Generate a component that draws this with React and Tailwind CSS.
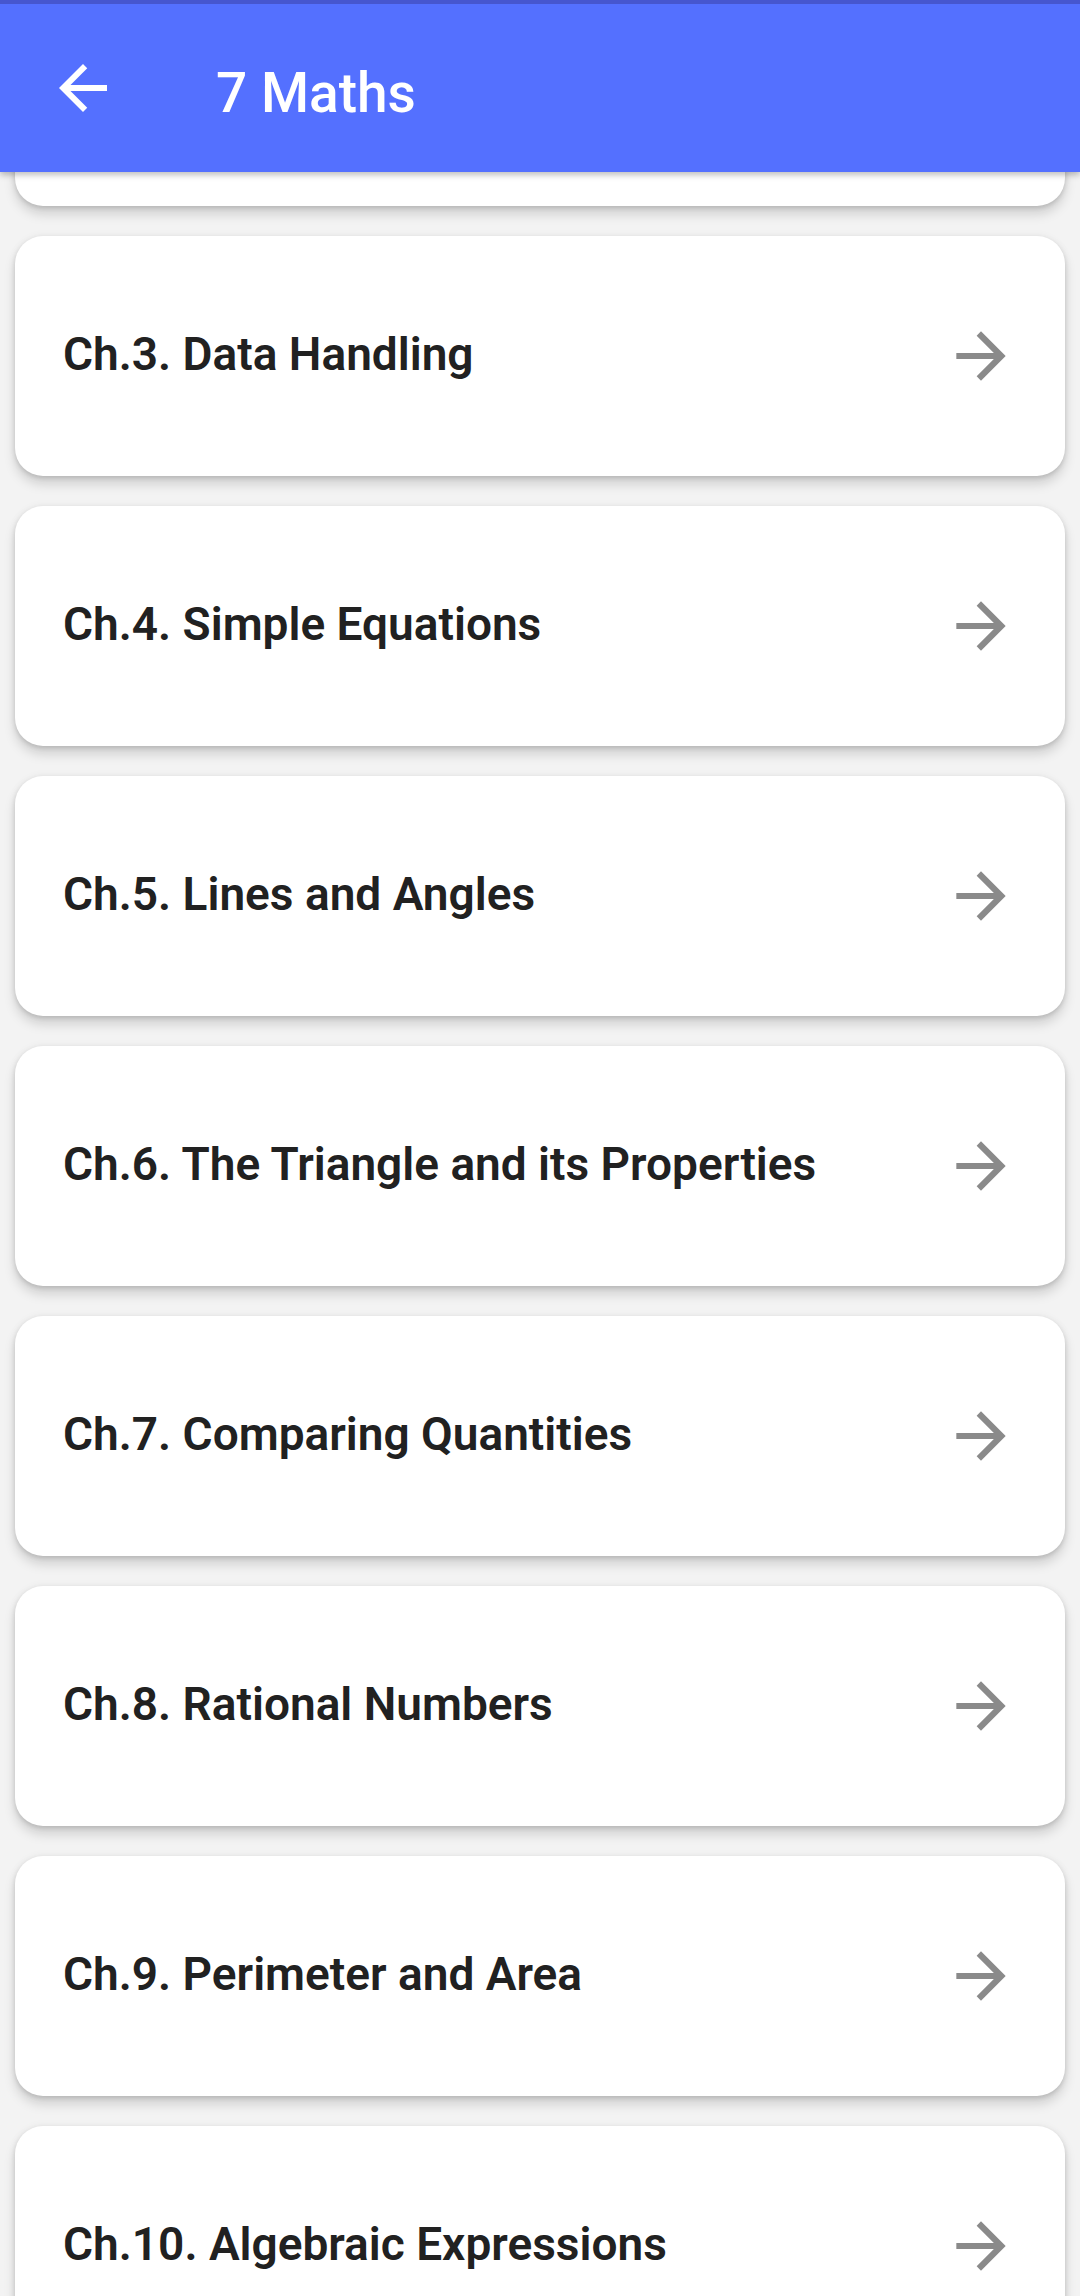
const CHAPTERS = [
  "Ch.3. Data Handling",
  "Ch.4. Simple Equations",
  "Ch.5. Lines and Angles",
  "Ch.6. The Triangle and its Properties",
  "Ch.7. Comparing Quantities",
  "Ch.8. Rational Numbers",
  "Ch.9. Perimeter and Area",
  "Ch.10. Algebraic Expressions",
];

const CARD =
  "h-[240px] rounded-[28px] bg-white shadow-[0_8px_12px_rgba(0,0,0,0.15),0_2px_4px_rgba(0,0,0,0.1),0_0_8px_rgba(0,0,0,0.05)]";

function ArrowBack() {
  return (
    <svg viewBox="0 0 24 24" className="h-[72px] w-[72px]" fill="currentColor">
      <path d="M20 11H7.83l5.59-5.59L12 4l-8 8 8 8 1.41-1.41L7.83 13H20v-2z" />
    </svg>
  );
}

function ArrowForward() {
  return (
    <svg viewBox="0 0 24 24" className="h-[74px] w-[74px]" fill="currentColor">
      <path d="M12 4l-1.41 1.41L16.17 11H4v2h12.17l-5.58 5.59L12 20l8-8z" />
    </svg>
  );
}

function ChapterCard({ title }) {
  return (
    <div className={`${CARD} flex items-center justify-between pl-[48px] pr-[47px]`}>
      <span className="pb-[3px] text-[46px] font-semibold text-[#212121]">{title}</span>
      <span className="text-[#8a8a8a]">
        <ArrowForward />
      </span>
    </div>
  );
}

export default function App() {
  return (
    <div
      className="relative h-[2296px] w-[1080px] overflow-hidden bg-[#f3f3f3]"
      style={{ fontFamily: "Roboto, 'Noto Sans', sans-serif" }}
    >
      <header className="relative z-10 bg-[#5470ff] shadow-[0_3px_6px_rgba(0,0,0,0.25)]">
        <div className="h-[4px] bg-[#4656cf]" />
        <div className="flex h-[168px] items-center">
          <div className="ml-[47px] text-white">
            <ArrowBack />
          </div>
          <h1 className="ml-[97px] pt-[10px] text-[55px] leading-none font-medium text-white">7 Maths</h1>
        </div>
      </header>
      {/* lista desplazada: la primera tarjeta queda casi oculta bajo la barra */}
      <div className="mt-[-206px] flex flex-col gap-[30px] px-[15px]">
        <div className={CARD} />
        {CHAPTERS.map((c) => (
          <ChapterCard key={c} title={c} />
        ))}
      </div>
    </div>
  );
}
